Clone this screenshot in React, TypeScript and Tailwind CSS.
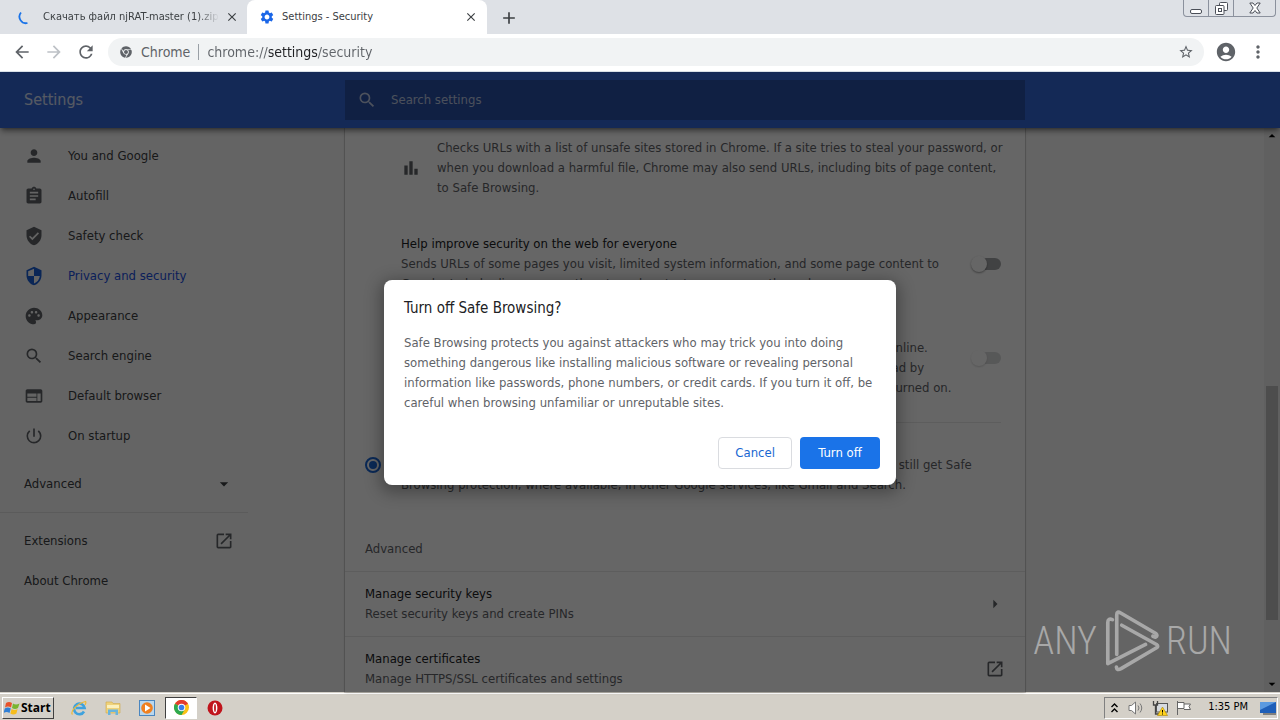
import type { ReactNode } from "react";
import { FaChrome } from "react-icons/fa";
import {
  MdAccountCircle,
  MdAdd,
  MdArrowBack,
  MdArrowDropDown,
  MdArrowDropUp,
  MdArrowForward,
  MdArrowRight,
  MdAssignment,
  MdBarChart,
  MdClose,
  MdMoreVert,
  MdOpenInNew,
  MdPalette,
  MdPerson,
  MdPowerSettingsNew,
  MdRefresh,
  MdSearch,
  MdSecurity,
  MdSettings,
  MdStarBorder,
  MdVerifiedUser,
  MdWeb
} from "react-icons/md";

const menu = [
  { label: "You and Google", icon: MdPerson },
  { label: "Autofill", icon: MdAssignment },
  { label: "Safety check", icon: MdVerifiedUser },
  { label: "Privacy and security", icon: MdSecurity, active: true },
  { label: "Appearance", icon: MdPalette },
  { label: "Search engine", icon: MdSearch },
  { label: "Default browser", icon: MdWeb },
  { label: "On startup", icon: MdPowerSettingsNew }
];

function TabStrip() {
  return (
    <div className="flex h-[34px] shrink-0 items-start bg-[#dee1e6] text-[11px] text-[#3c4043]">
      <div className="flex h-[34px] w-[247px] items-center pl-[18px] pr-2">
        <svg viewBox="0 0 16 16" className="size-4 shrink-0" fill="none" stroke="#1a73e8" strokeWidth="1.8">
          <path d="M3 3.5a6.5 6.5 0 0 0 6.5 10.5" />
        </svg>
        <span className="ml-[9px] w-[176px] overflow-hidden whitespace-nowrap [mask-image:linear-gradient(to_right,black_88%,transparent)]">
          Скачать файл njRAT-master (1).zip
        </span>
        <button aria-label="Close tab" className="ml-auto"><MdClose className="size-3.5" /></button>
      </div>
      <div className="flex h-[34px] w-[240px] items-center rounded-t-lg bg-white px-3 pr-[9px]">
        <MdSettings className="size-4 text-[#1a66e8]" />
        <span className="ml-[7px]">Settings - Security</span>
        <button aria-label="Close tab" className="ml-auto"><MdClose className="size-3.5" /></button>
      </div>
      <button aria-label="New tab" className="ml-3 mt-2"><MdAdd className="size-5" /></button>
      <div className="ml-auto mr-1 flex h-[17px] rounded-b border border-t-0 border-[#8b919d]">
        <button aria-label="Minimize" className="flex w-[25px] items-center justify-center border-r border-[#8b919d]">
          <svg viewBox="0 0 13 13" className="size-[13px]" fill="#fff" stroke="#4b4f58">
            <rect x=".5" y="7.5" width="11" height="4" rx="1.5" />
          </svg>
        </button>
        <button aria-label="Restore" className="flex w-[25px] items-center justify-center border-r border-[#8b919d]">
          <svg viewBox="0 0 13 13" className="size-[13px]" fill="#fff" stroke="#4b4f58">
            <rect x="4.5" y=".5" width="8" height="8" rx="1" />
            <rect x=".5" y="3.5" width="8.5" height="9" rx="1" />
            <rect x="3.5" y="6.5" width="3" height="3" />
          </svg>
        </button>
        <button aria-label="Close" className="flex w-[41px] items-center justify-center">
          <svg viewBox="0 0 12 12" className="size-3" fill="#fff" stroke="#4b4f58">
            <path d="M.8 1h3.2l2 2.5L8 1h3.2L7.8 6l3.4 5H8L6 8.5 4 11H.8l3.4-5z" />
          </svg>
        </button>
      </div>
    </div>
  );
}

function Toolbar() {
  return (
    <div className="flex h-[38px] shrink-0 items-center border-b border-[#dce3ea] bg-white pb-px text-[#5f6368]">
      <div className="flex w-[108px] items-center gap-3.5 pl-3">
        <button aria-label="Back"><MdArrowBack className="size-5" /></button>
        <button aria-label="Forward" disabled className="text-[#bdc1c6]"><MdArrowForward className="-ml-0.5 size-5" /></button>
        <button aria-label="Reload"><MdRefresh className="-ml-0.5 size-5" /></button>
      </div>
      <div className="flex h-7 grow items-center rounded-full bg-[#f1f3f4] pl-3 pr-2.5 text-sm">
        <FaChrome className="size-3" />
        <label htmlFor="address" className="ml-[9px]">Chrome</label>
        <span className="mx-2 h-4 w-px bg-[#9aa0a6]" />
        <input
          id="address"
          defaultValue="chrome://settings/security"
          className="grow bg-[linear-gradient(to_right,#5f6368_62px,#202124_62px,#202124_111px,#5f6368_111px)] bg-clip-text text-transparent outline-none"
        />
        <button aria-label="Bookmark this page"><MdStarBorder className="size-4" /></button>
      </div>
      <button aria-label="Profile" className="ml-[11px]"><MdAccountCircle className="size-[22px]" /></button>
      <button aria-label="Menu" className="ml-[11px] mr-3"><MdMoreVert className="size-5" /></button>
    </div>
  );
}

function Sidebar() {
  return (
    <nav className="w-[248px] pt-2 text-[#3c4043]">
      {menu.map(({ label, icon: Icon, active }) => (
        <a
          key={label}
          href="#"
          className={active ? "flex h-10 items-center pl-6 text-[#1a4fe0]" : "flex h-10 items-center pl-6"}
        >
          <Icon className={active ? "size-5 text-[#1a5fd8]" : "size-5 text-[#5f6368]"} />
          <span className="ml-6">{label}</span>
        </a>
      ))}
      <button className="mt-2 flex h-10 w-full items-center justify-between pl-6 pr-3.5">
        Advanced
        <MdArrowDropDown className="size-5" />
      </button>
      <hr className="my-2 border-[#e4e4e4]" />
      <a href="#" className="flex h-10 items-center justify-between pl-6 pr-3.5">
        Extensions
        <MdOpenInNew className="size-5 text-[#5f6368]" />
      </a>
      <a href="#" className="flex h-10 items-center pl-6">About Chrome</a>
    </nav>
  );
}

function SwitchRow({ id, title, disabled, children }: { id: string; title: string; disabled?: boolean; children: ReactNode }) {
  return (
    <div className="flex items-center justify-between pl-14 pr-6">
      <label htmlFor={id} className="whitespace-nowrap leading-5">
        <span className="block text-[#202124]">{title}</span>
        {children}
      </label>
      <input
        id={id}
        type="checkbox"
        role="switch"
        disabled={disabled}
        className="relative h-3 w-7 shrink-0 appearance-none rounded-full bg-[#a4a6a9] before:absolute before:-left-0.5 before:-top-0.5 before:size-4 before:rounded-full before:bg-white before:shadow-[0_1px_2px_rgba(0,0,0,0.4)] disabled:opacity-40"
      />
    </div>
  );
}

function LinkRow({ title, hint, children }: { title: string; hint: string; children: ReactNode }) {
  return (
    <a href="#" className="flex h-[65px] items-center justify-between border-t border-[#e8e8e8] px-5 leading-5">
      <span>
        <span className="block text-[#202124]">{title}</span>
        {hint}
      </span>
      {children}
    </a>
  );
}

function SecurityPage() {
  return (
    <main className="h-full overflow-hidden bg-white pt-2.5 text-[#5f6368] shadow ring-1 ring-black/15">
      <div className="flex items-center pl-14 leading-5">
        <MdBarChart className="size-5 shrink-0" />
        <p className="ml-4 whitespace-nowrap">
          Checks URLs with a list of unsafe sites stored in Chrome. If a site tries to steal your password, or<br />
          when you download a harmful file, Chrome may also send URLs, including bits of page content,<br />
          to Safe Browsing.
        </p>
      </div>
      <div className="mt-9">
        <SwitchRow id="reporting" title="Help improve security on the web for everyone">
          Sends URLs of some pages you visit, limited system information, and some page content to<br />
          Google, to help discover new threats and protect everyone on the web.
        </SwitchRow>
      </div>
      <div className="mt-6">
        <SwitchRow id="leaks" disabled title="Warn you if passwords are exposed in a data breach">
          Chrome periodically checks your passwords against lists that have been published online.<br />
          When doing this, your passwords and usernames are encrypted, so they can't be read by<br />
          anyone, including Google. You can only use this feature whenever Safe Browsing is turned on.
        </SwitchRow>
      </div>
      <hr className="ml-14 mr-6 mt-6 border-[#e8e8e8]" />
      <div className="mt-3 flex items-center pl-5 leading-5">
        <input
          id="no-protection"
          type="radio"
          defaultChecked
          className="size-4 shrink-0 appearance-none rounded-full border-2 border-[#1a66d8] bg-[#1a66d8] bg-clip-content p-0.5"
        />
        <label htmlFor="no-protection" className="ml-5 whitespace-nowrap">
          <span className="block text-[#202124]">No protection (not recommended)</span>
          Does not protect you against dangerous websites, downloads, and extensions. You'll still get Safe<br />
          Browsing protection, where available, in other Google services, like Gmail and Search.
        </label>
      </div>
      <h2 className="mb-3 mt-11 pl-5 leading-5">Advanced</h2>
      <LinkRow title="Manage security keys" hint="Reset security keys and create PINs">
        <MdArrowRight className="size-5" />
      </LinkRow>
      <LinkRow title="Manage certificates" hint="Manage HTTPS/SSL certificates and settings">
        <MdOpenInNew className="size-5" />
      </LinkRow>
    </main>
  );
}

function Dialog() {
  return (
    <div className="absolute inset-0 flex items-center justify-center bg-black/60">
      <div role="dialog" aria-labelledby="dialog-title" className="w-[512px] rounded-lg bg-white px-5 py-4 shadow-[0_4px_16px_4px_rgba(0,0,0,0.3)]">
        <h1 id="dialog-title" className="text-[15px] leading-6 text-[#202124]">Turn off Safe Browsing?</h1>
        <p className="mt-[13px] whitespace-nowrap leading-5 text-[#5f6368]">
          Safe Browsing protects you against attackers who may trick you into doing<br />
          something dangerous like installing malicious software or revealing personal<br />
          information like passwords, phone numbers, or credit cards. If you turn it off, be<br />
          careful when browsing unfamiliar or unreputable sites.
        </p>
        <div className="-mr-1 mt-6 flex justify-end gap-2">
          <button className="h-8 rounded border border-[#dadce0] px-4 text-[#1967d2]">Cancel</button>
          <button className="h-8 min-w-20 rounded bg-[#1a73e8] px-4 text-white">Turn off</button>
        </div>
      </div>
    </div>
  );
}

function Watermark() {
  return (
    <div className="pointer-events-none absolute bottom-5 right-12 flex items-center font-['Roboto_Condensed','Open_Sans_Condensed','Open_Sans',sans-serif] text-[38px] font-light leading-none text-[#a8a8a8]">
      ANY
      <svg viewBox="240 25 165 190" className="ml-2 mr-1.5 h-[63px] w-[55px]" fill="none" stroke="currentColor" strokeWidth="11" strokeLinejoin="round" strokeLinecap="round">
        <path d="M262 57Q248 52 248 66V190L362 132" />
        <path d="M275 162V42Q275 30 287 37L393 99Q400 106 392 110L384 107" />
        <path d="M290 74L395 132Q402 137 395 142L288 205Q275 212 274 200" />
      </svg>
      RUN
    </div>
  );
}

function ChromeLogo() {
  return (
    <svg viewBox="0 0 24 24" className="size-[15px]">
      <circle cx="12" cy="12" r="12" fill="#fbc116" />
      <path d="M12 12 1.6 6a12 12 0 0 1 20.8 0z" fill="#e33b2e" />
      <path d="M12 12 1.6 6A12 12 0 0 0 12 24l5.2-9z" fill="#2da94f" />
      <circle cx="12" cy="12" r="6" fill="#fff" />
      <circle cx="12" cy="12" r="4.5" fill="#3a7de8" />
    </svg>
  );
}

function Taskbar() {
  return (
    <footer className="flex h-7 shrink-0 items-center border-t border-[#d4d0c8] bg-[#d4d0c8] px-0.5 pt-0.5 text-black shadow-[inset_0_1px_0_#fff]">
      <button className="flex h-[22px] w-[52px] items-center gap-px border border-b-[#404040] border-l-white border-r-[#404040] border-t-white pl-px font-['Open_Sans',sans-serif] text-xs font-bold">
        <svg viewBox="0 0 16 16" className="size-4 shrink-0">
          <path d="M2 3c2-1.5 4-1.5 6 0L7 7.5C5 6.2 3 6.2 1 7.5z" fill="#e8532c" />
          <path d="M9 3.5c2 1.2 4 1.2 6.5 0L14 8c-2 1.2-4 1.2-6 0z" fill="#79b530" />
          <path d="M.8 8.5c2-1.3 4-1.3 6 0L5.5 13c-2-1.3-4-1.3-6 0z" fill="#2f7fd6" />
          <path d="M7.6 9c2 1.2 4 1.2 6 0l-1.2 4.5c-2 1.2-4 1.2-6 0z" fill="#f6bd1c" />
        </svg>
        Start
      </button>
      <div className="ml-[17px] flex items-center gap-[18px]">
        <button aria-label="Internet Explorer">
          <svg viewBox="0 0 16 16" className="size-4" fill="none">
            <path d="M13 11.5A5.3 5.3 0 1 1 13.6 8H5" stroke="#3fa2dd" strokeWidth="2.6" />
            <path d="M1.5 14.5C-1 12 5 4 14.5 1.5c1 .8.3 2-.5 3.5" stroke="#ecb93a" strokeWidth="1.2" />
          </svg>
        </button>
        <button aria-label="Explorer">
          <svg viewBox="0 0 16 16" className="size-4">
            <path d="M1 2h6l1 1.5h7V13H1z" fill="#efd27a" stroke="#cfa94a" strokeWidth=".6" />
            <path d="M2 5h12v3H2z" fill="#fbf0bd" />
            <path d="M3 15V9.5h10V15h-2.500v-3h-5v3z" fill="#69b4dc" />
          </svg>
        </button>
        <button aria-label="Media Player">
          <svg viewBox="0 0 16 16" className="size-4">
            <rect x=".5" y=".5" width="15" height="15" fill="#b9d7ee" stroke="#4a86c0" />
            <circle cx="8" cy="8" r="5.8" fill="#f08020" />
            <path d="m6 4.5 5.5 3.5L6 11.500z" fill="#fff" />
          </svg>
        </button>
      </div>
      <button aria-label="Chrome" className="ml-2.5 flex h-[22px] w-8 items-center justify-center border border-b-white border-l-[#404040] border-r-white border-t-[#404040] bg-white">
        <ChromeLogo />
      </button>
      <button aria-label="Opera" className="ml-2.5">
        <svg viewBox="0 0 16 16" className="size-4">
          <circle cx="8" cy="8" r="7.5" fill="#c0141c" />
          <ellipse cx="8" cy="8" rx="2.4" ry="5.4" fill="#fff" />
          <ellipse cx="8" cy="8" rx=".9" ry="4" fill="#c0141c" />
        </svg>
      </button>
      <div className="ml-auto flex h-[22px] items-center border border-b-white border-l-[#808080] border-r-white border-t-[#808080] pl-1.5 pr-px text-[11px]">
        <svg viewBox="0 0 7 10" className="mr-2.5 h-2.5 w-[7px]" fill="none" stroke="#000" strokeWidth="1.4">
          <path d="m.5 4 3-3 3 3M.5 9l3-3 3 3" />
        </svg>
        <svg viewBox="0 0 16 16" className="mr-2 size-4" fill="#fff" stroke="#777">
          <path d="M1 5.5h2.5L7.500 2v12l-4-3.500H1z" />
          <path d="M10 5.500q2 2.500 0 5M12 3.500q3.500 4.500 0 9" fill="none" />
        </svg>
        <svg viewBox="0 0 16 16" className="mr-2 size-4">
          <rect x="4.5" y="3.5" width="11" height="8.5" fill="#d7dbe0" stroke="#555" />
          <path d="M1.5 1v4h4V1M3.500 5v9h4" fill="none" stroke="#444" strokeWidth="1.3" />
          <path d="m10.500 7 5 8.500h-10z" fill="#ffd21c" stroke="#a98500" strokeWidth=".6" />
          <path d="M10.500 10v2.500m0 1v1" stroke="#000" />
        </svg>
        <svg viewBox="0 0 16 16" className="mr-4 size-4" fill="#fff" stroke="#666">
          <path d="M1.500 1v14M2 2.500h6v6H2M8 4h6.500L13 6.500l1.500 3H8" />
        </svg>
        1:35 PM
        <svg viewBox="0 0 16 14" className="ml-3 h-3.5 w-4">
          <rect y="1" width="16" height="11" fill="#1f5fb8" />
          <path d="M0 1h16L0 9z" fill="#5b9ae0" />
          <path d="M3 13h13" stroke="#333" />
        </svg>
      </div>
    </footer>
  );
}

export default function App() {
  return (
    <div className="flex h-screen flex-col overflow-hidden font-['DejaVu_Sans_Condensed',sans-serif] text-[13px]">
      <TabStrip />
      <Toolbar />
      <div className="relative flex min-h-0 grow flex-col bg-[#fafafa]">
        <header className="z-0 grid h-14 shrink-0 grid-cols-[23fr_680px_17fr] items-center bg-[#3367d6] text-white shadow-md shadow-black/40">
          <span className="pl-6 text-base text-white/80">Settings</span>
          <label className="flex h-10 items-center bg-[#2850a8] pl-3">
            <MdSearch className="size-5 text-white/70" />
            <input placeholder="Search settings" aria-label="Search settings" className="ml-3.5 grow outline-none placeholder:text-white/70" />
          </label>
        </header>
        <div className="flex min-h-0 grow">
          <div className="-mr-4 grid min-h-0 grow grid-cols-[23fr_680px_17fr]">
            <Sidebar />
            <SecurityPage />
          </div>
          <div className="flex w-4 flex-col items-center bg-[#f1f1f1]">
            <MdArrowDropUp className="size-4 shrink-0" />
            <div className="mt-auto h-[234px] w-3 bg-[#c1c1c1]" />
            <div className="h-14" />
            <MdArrowDropDown className="size-4 shrink-0" />
          </div>
        </div>
        <Dialog />
        <Watermark />
      </div>
      <Taskbar />
    </div>
  );
}
